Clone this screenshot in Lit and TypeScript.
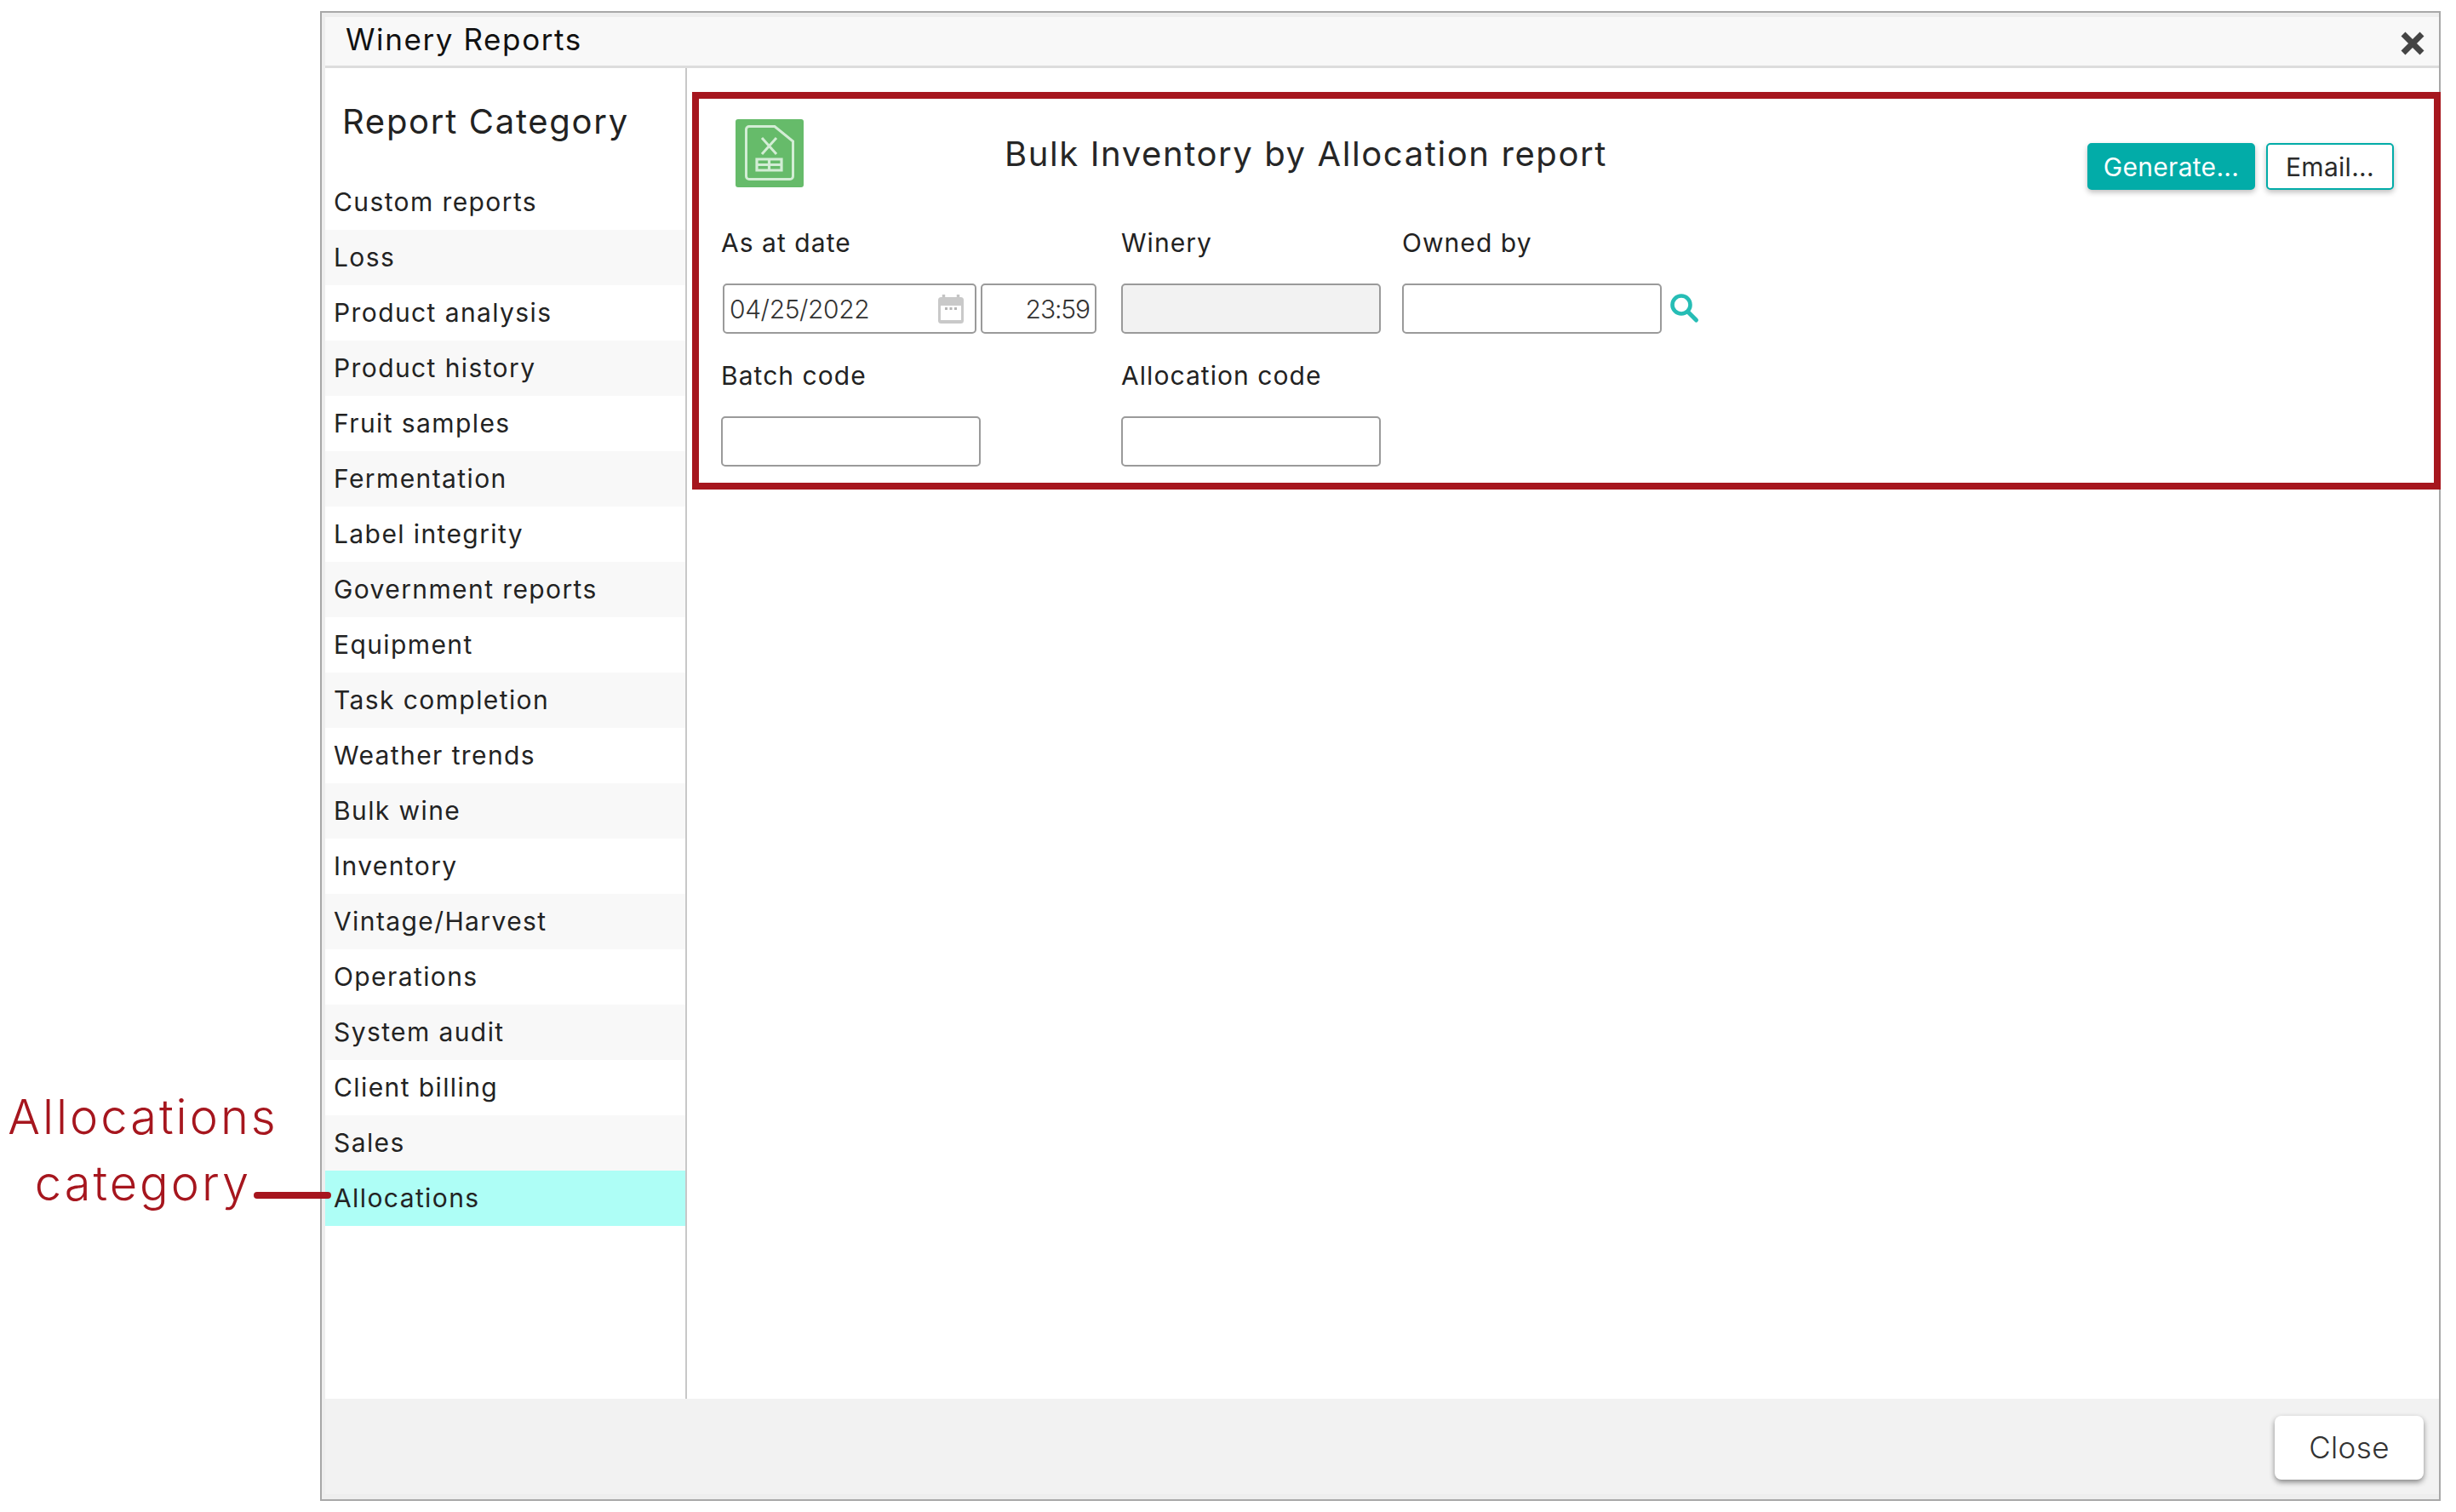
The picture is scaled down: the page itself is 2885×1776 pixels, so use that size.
import { LitElement, html, css } from "lit";
import { customElement } from "lit/decorators.js";

const CATEGORIES = [
  "Custom reports", "Loss", "Product analysis", "Product history", "Fruit samples",
  "Fermentation", "Label integrity", "Government reports", "Equipment", "Task completion",
  "Weather trends", "Bulk wine", "Inventory", "Vintage/Harvest", "Operations",
  "System audit", "Client billing", "Sales", "Allocations",
];

@customElement("app-root")
export class AppRoot extends LitElement {
  static styles = css`
    :host {
      display: flex;
      position: relative;
      width: 2885px;
      height: 1776px;
      background: #fff;
      font-family: Inter, "Liberation Sans", sans-serif;
      color: #232323;
      overflow: hidden;
    }
    .note {
      width: 376px;
      flex: none;
      box-sizing: border-box;
      padding-top: 1273px;
    }
    .note-text {
      width: 336px;
      text-align: center;
      font-size: 56px;
      line-height: 78px;
      font-weight: 300;
      letter-spacing: 3px;
      color: #a6161e;
    }
    .connector {
      position: absolute;
      left: 298px;
      top: 1400px;
      width: 91px;
      height: 8px;
      border-radius: 4px;
      background: #a6161e;
    }
    .dialog {
      box-sizing: border-box;
      width: 2491px;
      height: 1750px;
      margin-top: 13px;
      border: 2px solid #a8a8a8;
      background: #eeeeee;
      padding: 5px 0 6px 4px;
      display: flex;
      flex-direction: column;
    }
    .titlebar {
      flex: none;
      height: 60px;
      box-sizing: border-box;
      background: #f8f8f8;
      border-bottom: 3px solid #dddddd;
      padding: 0 17px 5px 24px;
      display: flex;
      align-items: center;
      justify-content: space-between;
    }
    .title {
      font-size: 35px;
      letter-spacing: 1.6px;
      color: #111;
    }
    .x {
      display: block;
      width: 28px;
      height: 28px;
      margin-top: 9px;
    }
    .body {
      flex: 1;
      min-height: 0;
      display: flex;
      background: #fff;
    }
    .sidebar {
      flex: none;
      width: 425px;
      box-sizing: border-box;
      border-right: 2px solid #c8c8c8;
      padding-top: 38px;
    }
    .heading {
      height: 50px;
      line-height: 50px;
      margin: 0 0 37px 20px;
      font-size: 40px;
      font-weight: 400;
      letter-spacing: 1.7px;
      color: #222;
    }
    .row {
      height: 65px;
      line-height: 65px;
      padding-left: 10px;
      font-size: 30px;
      letter-spacing: 1.4px;
    }
    .row:nth-child(even) {
      background: #f8f8f8;
    }
    .row.active {
      background: #aefef6;
    }
    .main {
      flex: 1;
      min-width: 0;
      padding: 28px 0 0 6px;
    }
    .panel {
      box-sizing: border-box;
      height: 467px;
      margin-right: -2px;
      border: 8px solid #a6161e;
      background: #fff;
    }
    .head {
      height: 150px;
      box-sizing: border-box;
      padding: 24px 47px 0 43px;
      display: flex;
      align-items: flex-start;
    }
    .icon {
      display: block;
      width: 80px;
      height: 80px;
      flex: none;
    }
    .report {
      margin-left: 236px;
      height: 80px;
      line-height: 82px;
      font-size: 40px;
      letter-spacing: 1.6px;
      color: #262626;
    }
    .actions {
      margin-left: auto;
      margin-top: 28px;
      display: flex;
      gap: 13px;
    }
    .btn {
      box-sizing: border-box;
      height: 55px;
      border-radius: 5px;
      border: 2px solid #02aca8;
      font-size: 30px;
      line-height: 52px;
      text-align: center;
      box-shadow: 0 3px 6px rgba(0, 0, 0, 0.25);
      letter-spacing: 0.3px;
    }
    .primary {
      width: 197px;
      background: #02aca8;
      color: #fff;
    }
    .secondary {
      width: 150px;
      background: #fff;
      color: #2b2b2b;
    }
    .form {
      display: grid;
      grid-template-columns: 470px 330px 1fr;
      row-gap: 30px;
      padding-left: 26px;
    }
    .field {
      display: flex;
      flex-direction: column;
    }
    .label {
      height: 38px;
      line-height: 38px;
      margin-bottom: 29px;
      font-size: 30px;
      letter-spacing: 1.05px;
      color: #222;
    }
    .controls {
      display: flex;
      align-items: center;
    }
    .input {
      box-sizing: border-box;
      height: 59px;
      width: 305px;
      border: 2px solid #9a9a9a;
      border-radius: 5px;
      background: #fff;
      display: flex;
      align-items: center;
      font-size: 30px;
      font-weight: 300;
      color: #333;
    }
    .disabled {
      background: #f2f2f2;
    }
    .date {
      width: 298px;
      margin-left: 2px;
      padding: 0 13px 0 6px;
      justify-content: space-between;
      letter-spacing: -0.4px;
    }
    .time {
      width: 136px;
      margin-left: 5px;
      padding-right: 6px;
      justify-content: flex-end;
      letter-spacing: -1.1px;
    }
    .cal {
      display: block;
      width: 30px;
      height: 34px;
    }
    .search {
      display: block;
      width: 36px;
      height: 36px;
      margin-left: 9px;
    }
    .footer {
      flex: none;
      height: 112px;
      box-sizing: border-box;
      background: #f2f2f2;
      padding: 20px 18px 0 0;
      display: flex;
      justify-content: flex-end;
      align-items: flex-start;
    }
    .close {
      box-sizing: border-box;
      width: 175px;
      height: 75px;
      line-height: 75px;
      text-align: center;
      border-radius: 8px;
      background: #fff;
      box-shadow: 0 3px 6px rgba(0, 0, 0, 0.45);
      font-size: 35px;
      font-weight: 300;
      letter-spacing: 0.4px;
      color: #333;
    }
  `;

  render() {
    return html`
      <div class="note">
        <div class="note-text">Allocations<br />category</div>
      </div>
      <div class="dialog">
        <div class="titlebar">
          <span class="title">Winery Reports</span>
          <svg class="x" viewBox="0 0 28 28">
            <path d="M3 3L25 25M25 3L3 25" stroke="#444" stroke-width="7" fill="none" />
          </svg>
        </div>
        <div class="body">
          <div class="sidebar">
            <h2 class="heading">Report Category</h2>
            <div class="list">
              ${CATEGORIES.map(
                (c) => html`<div class="row ${c === "Allocations" ? "active" : ""}">${c}</div>`
              )}
            </div>
          </div>
          <div class="main">
            <div class="panel">
              <div class="head">
                <svg class="icon" viewBox="0 0 80 80">
                  <rect width="80" height="80" rx="3" fill="#66bb6a" />
                  <path
                    d="M16 8.5H46L67.5 26V67a3.5 3.5 0 0 1-3.5 3.5H16a3.5 3.5 0 0 1-3.5-3.5V12a3.5 3.5 0 0 1 3.5-3.5Z"
                    fill="none"
                    stroke="#d3edd5"
                    stroke-width="3"
                  />
                  <path
                    d="M31 22L48 41M48 22L31 41"
                    fill="none"
                    stroke="#d3edd5"
                    stroke-width="3"
                  />
                  <path
                    d="M25 47H54V60H25ZM25 53.5H54M39.5 47V60"
                    fill="none"
                    stroke="#d3edd5"
                    stroke-width="3.2"
                  />
                </svg>
                <div class="report">Bulk Inventory by Allocation report</div>
                <div class="actions">
                  <div class="btn primary">Generate...</div>
                  <div class="btn secondary">Email...</div>
                </div>
              </div>
              <div class="form">
                <div class="field">
                  <div class="label">As at date</div>
                  <div class="controls">
                    <div class="input date">
                      <span>04/25/2022</span>
                      <svg class="cal" viewBox="0 0 30 34">
                        <path d="M6.5 0v6M23.5 0v6" stroke="#c4c4c4" stroke-width="3.4" />
                        <rect y="3" width="30" height="31" rx="3.5" fill="#c9c9c9" />
                        <rect x="3" y="13" width="24" height="17" fill="#fff" />
                        <path d="M8 16.5h3M13.5 16.5h3M19 16.5h3" stroke="#b5b5b5" stroke-width="3" />
                      </svg>
                    </div>
                    <div class="input time">23:59</div>
                  </div>
                </div>
                <div class="field">
                  <div class="label">Winery</div>
                  <div class="controls"><div class="input disabled"></div></div>
                </div>
                <div class="field">
                  <div class="label">Owned by</div>
                  <div class="controls">
                    <div class="input"></div>
                    <svg class="search" viewBox="0 0 36 36">
                      <circle cx="14" cy="13" r="10.5" fill="none" stroke="#26bdb5" stroke-width="4.6" />
                      <path d="M21.5 21L31.5 31" stroke="#26bdb5" stroke-width="5" stroke-linecap="round" />
                    </svg>
                  </div>
                </div>
                <div class="field">
                  <div class="label">Batch code</div>
                  <div class="controls"><div class="input"></div></div>
                </div>
                <div class="field">
                  <div class="label">Allocation code</div>
                  <div class="controls"><div class="input"></div></div>
                </div>
              </div>
            </div>
          </div>
        </div>
        <div class="footer"><div class="close">Close</div></div>
      </div>
      <div class="connector"></div>
    `;
  }
}
